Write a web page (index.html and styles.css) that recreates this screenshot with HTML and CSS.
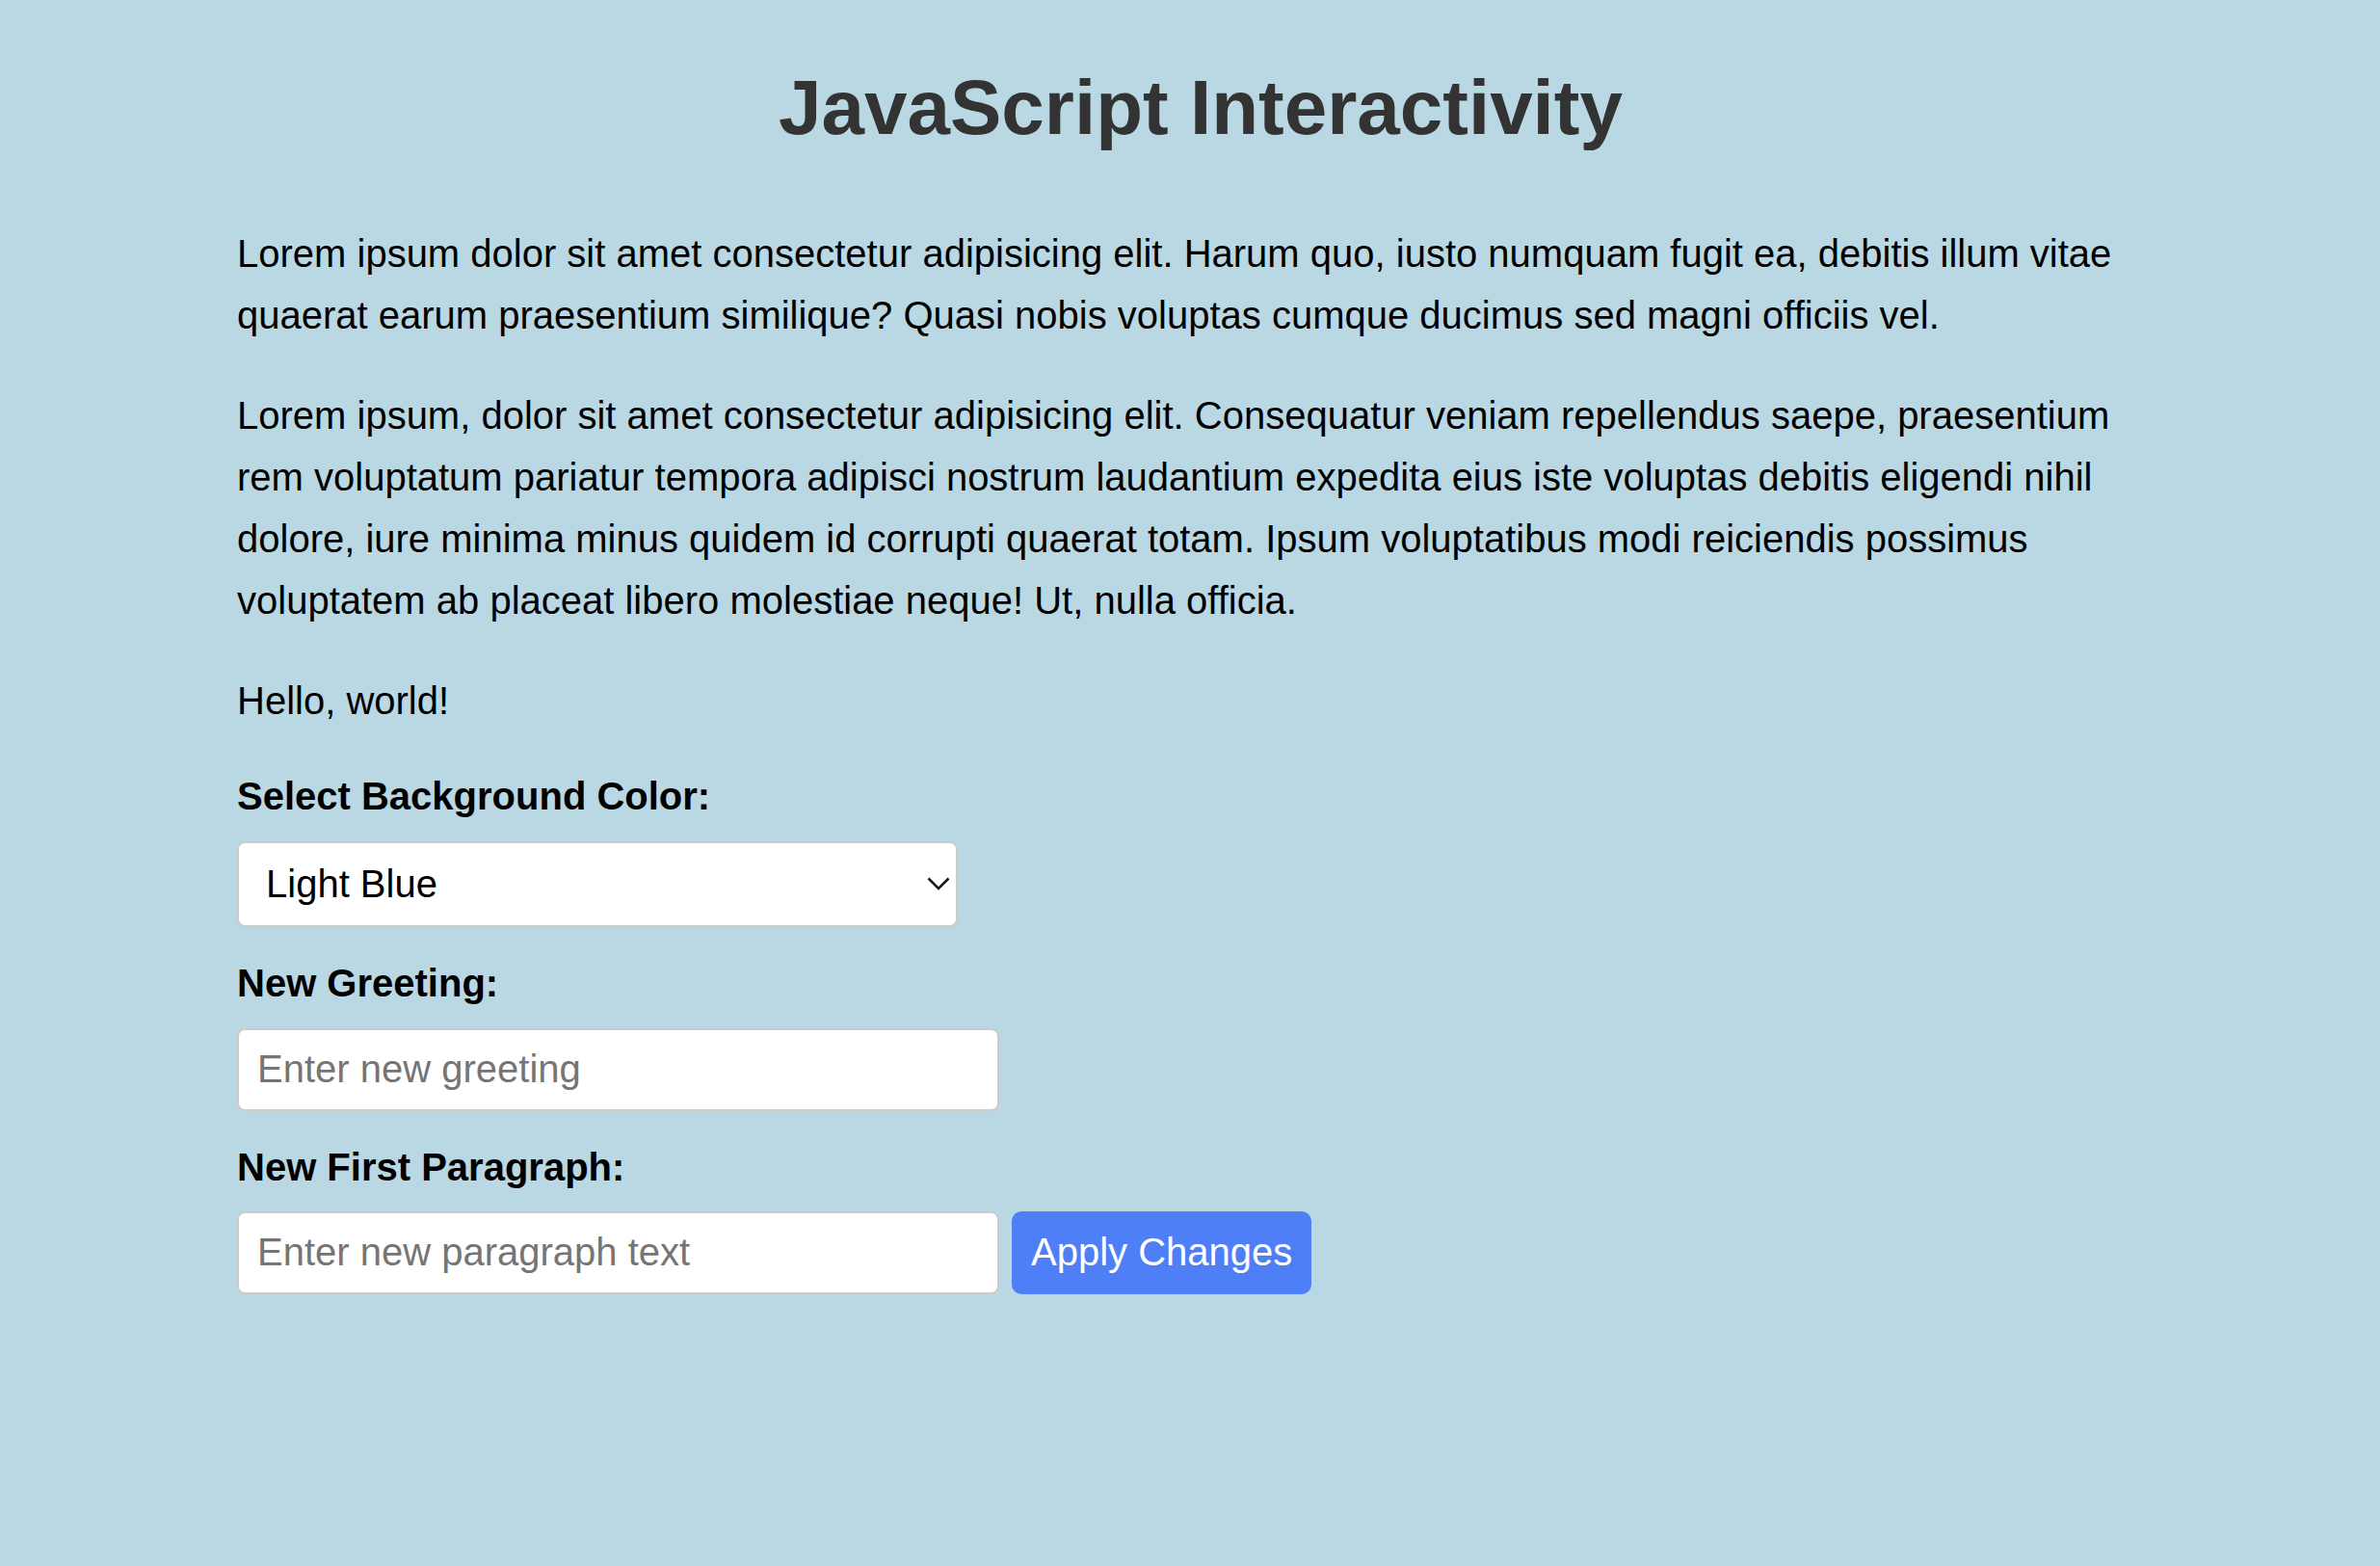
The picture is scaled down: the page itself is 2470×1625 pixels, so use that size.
FILE: index.html
```html
<!DOCTYPE html>
<html lang="en">
<head>
<meta charset="utf-8">
<title>JavaScript Interactivity</title>
<link rel="stylesheet" href="styles.css">
</head>
<body>
<main class="page">
  <h1 class="title">JavaScript Interactivity</h1>
  <p class="text">Lorem ipsum dolor sit amet consectetur adipisicing elit. Harum quo, iusto numquam fugit ea, debitis illum vitae quaerat earum praesentium similique? Quasi nobis voluptas cumque ducimus sed magni officiis vel.</p>
  <p class="text">Lorem ipsum, dolor sit amet consectetur adipisicing elit. Consequatur veniam repellendus saepe, praesentium rem voluptatum pariatur tempora adipisci nostrum laudantium expedita eius iste voluptas debitis eligendi nihil dolore, iure minima minus quidem id corrupti quaerat totam. Ipsum voluptatibus modi reiciendis possimus voluptatem ab placeat libero molestiae neque! Ut, nulla officia.</p>
  <p class="text greeting">Hello, world!</p>

  <form class="controls">
    <label class="field-label" for="bg">Select Background Color:</label>
    <div class="select-wrap">
      <select id="bg" class="color-select">
        <option selected>Light Blue</option>
        <option>Light Green</option>
        <option>Light Pink</option>
        <option>White</option>
      </select>
      <svg class="chevron" width="24" height="14" viewBox="0 0 24 14" aria-hidden="true"><polyline points="1.5,1.5 12,12 22.5,1.5" fill="none" stroke="#1a1a1a" stroke-width="2.6"/></svg>
    </div>

    <label class="field-label" for="greet">New Greeting:</label>
    <input id="greet" class="text-input" type="text" placeholder="Enter new greeting">

    <label class="field-label" for="para">New First Paragraph:</label>
    <div class="row">
      <input id="para" class="text-input" type="text" placeholder="Enter new paragraph text">
      <button type="button" class="apply-btn">Apply Changes</button>
    </div>
  </form>
</main>
</body>
</html>
```
FILE: styles.css
```css
html, body {
  margin: 0;
}

body {
  background: #bad8e3;
  font-family: "Liberation Sans", Arial, sans-serif;
  color: #000;
}

.page {
  width: 2000px;
  margin: 0 0 0 246px;
  padding-top: 48px;
}

.title {
  margin: 0 0 55px;
  font-size: 80px;
  line-height: 128px;
  font-weight: 700;
  color: #333;
  text-align: center;
}

.text {
  margin: 0 0 40px;
  font-size: 40px;
  line-height: 64px;
}

.greeting {
  margin-bottom: 44px;
}

.controls {
  margin: 0;
}

.field-label {
  display: block;
  font-size: 40px;
  font-weight: 700;
  line-height: 46px;
  margin-bottom: 23.5px;
}

.select-wrap {
  position: relative;
  width: 748px;
  margin-bottom: 35.5px;
}

.color-select {
  -webkit-appearance: none;
  appearance: none;
  display: block;
  box-sizing: border-box;
  width: 748px;
  height: 89px;
  margin: 0;
  padding: 0 44px 0 28px;
  border: 2px solid #ccc;
  border-radius: 8px;
  background: #fff;
  font-family: "Liberation Sans", Arial, sans-serif;
  font-size: 40px;
  color: #000;
}

.chevron {
  position: absolute;
  right: 8px;
  top: 37.5px;
  pointer-events: none;
}

.text-input {
  display: block;
  box-sizing: border-box;
  width: 791px;
  height: 86px;
  margin: 0 0 35px;
  padding: 0 19px;
  border: 2px solid #ccc;
  border-radius: 8px;
  background: #fff;
  font-family: "Liberation Sans", Arial, sans-serif;
  font-size: 40px;
  color: #000;
}

.text-input::placeholder {
  color: #757575;
}

.row {
  display: flex;
  align-items: stretch;
  gap: 13px;
}

.row .text-input {
  margin: 0;
  height: 85.5px;
}

.apply-btn {
  box-sizing: border-box;
  height: 85.5px;
  margin: 0;
  padding: 0 20px;
  border: none;
  border-radius: 10px;
  background: #4f7ff6;
  color: #fff;
  font-family: "Liberation Sans", Arial, sans-serif;
  font-size: 40px;
}
```
